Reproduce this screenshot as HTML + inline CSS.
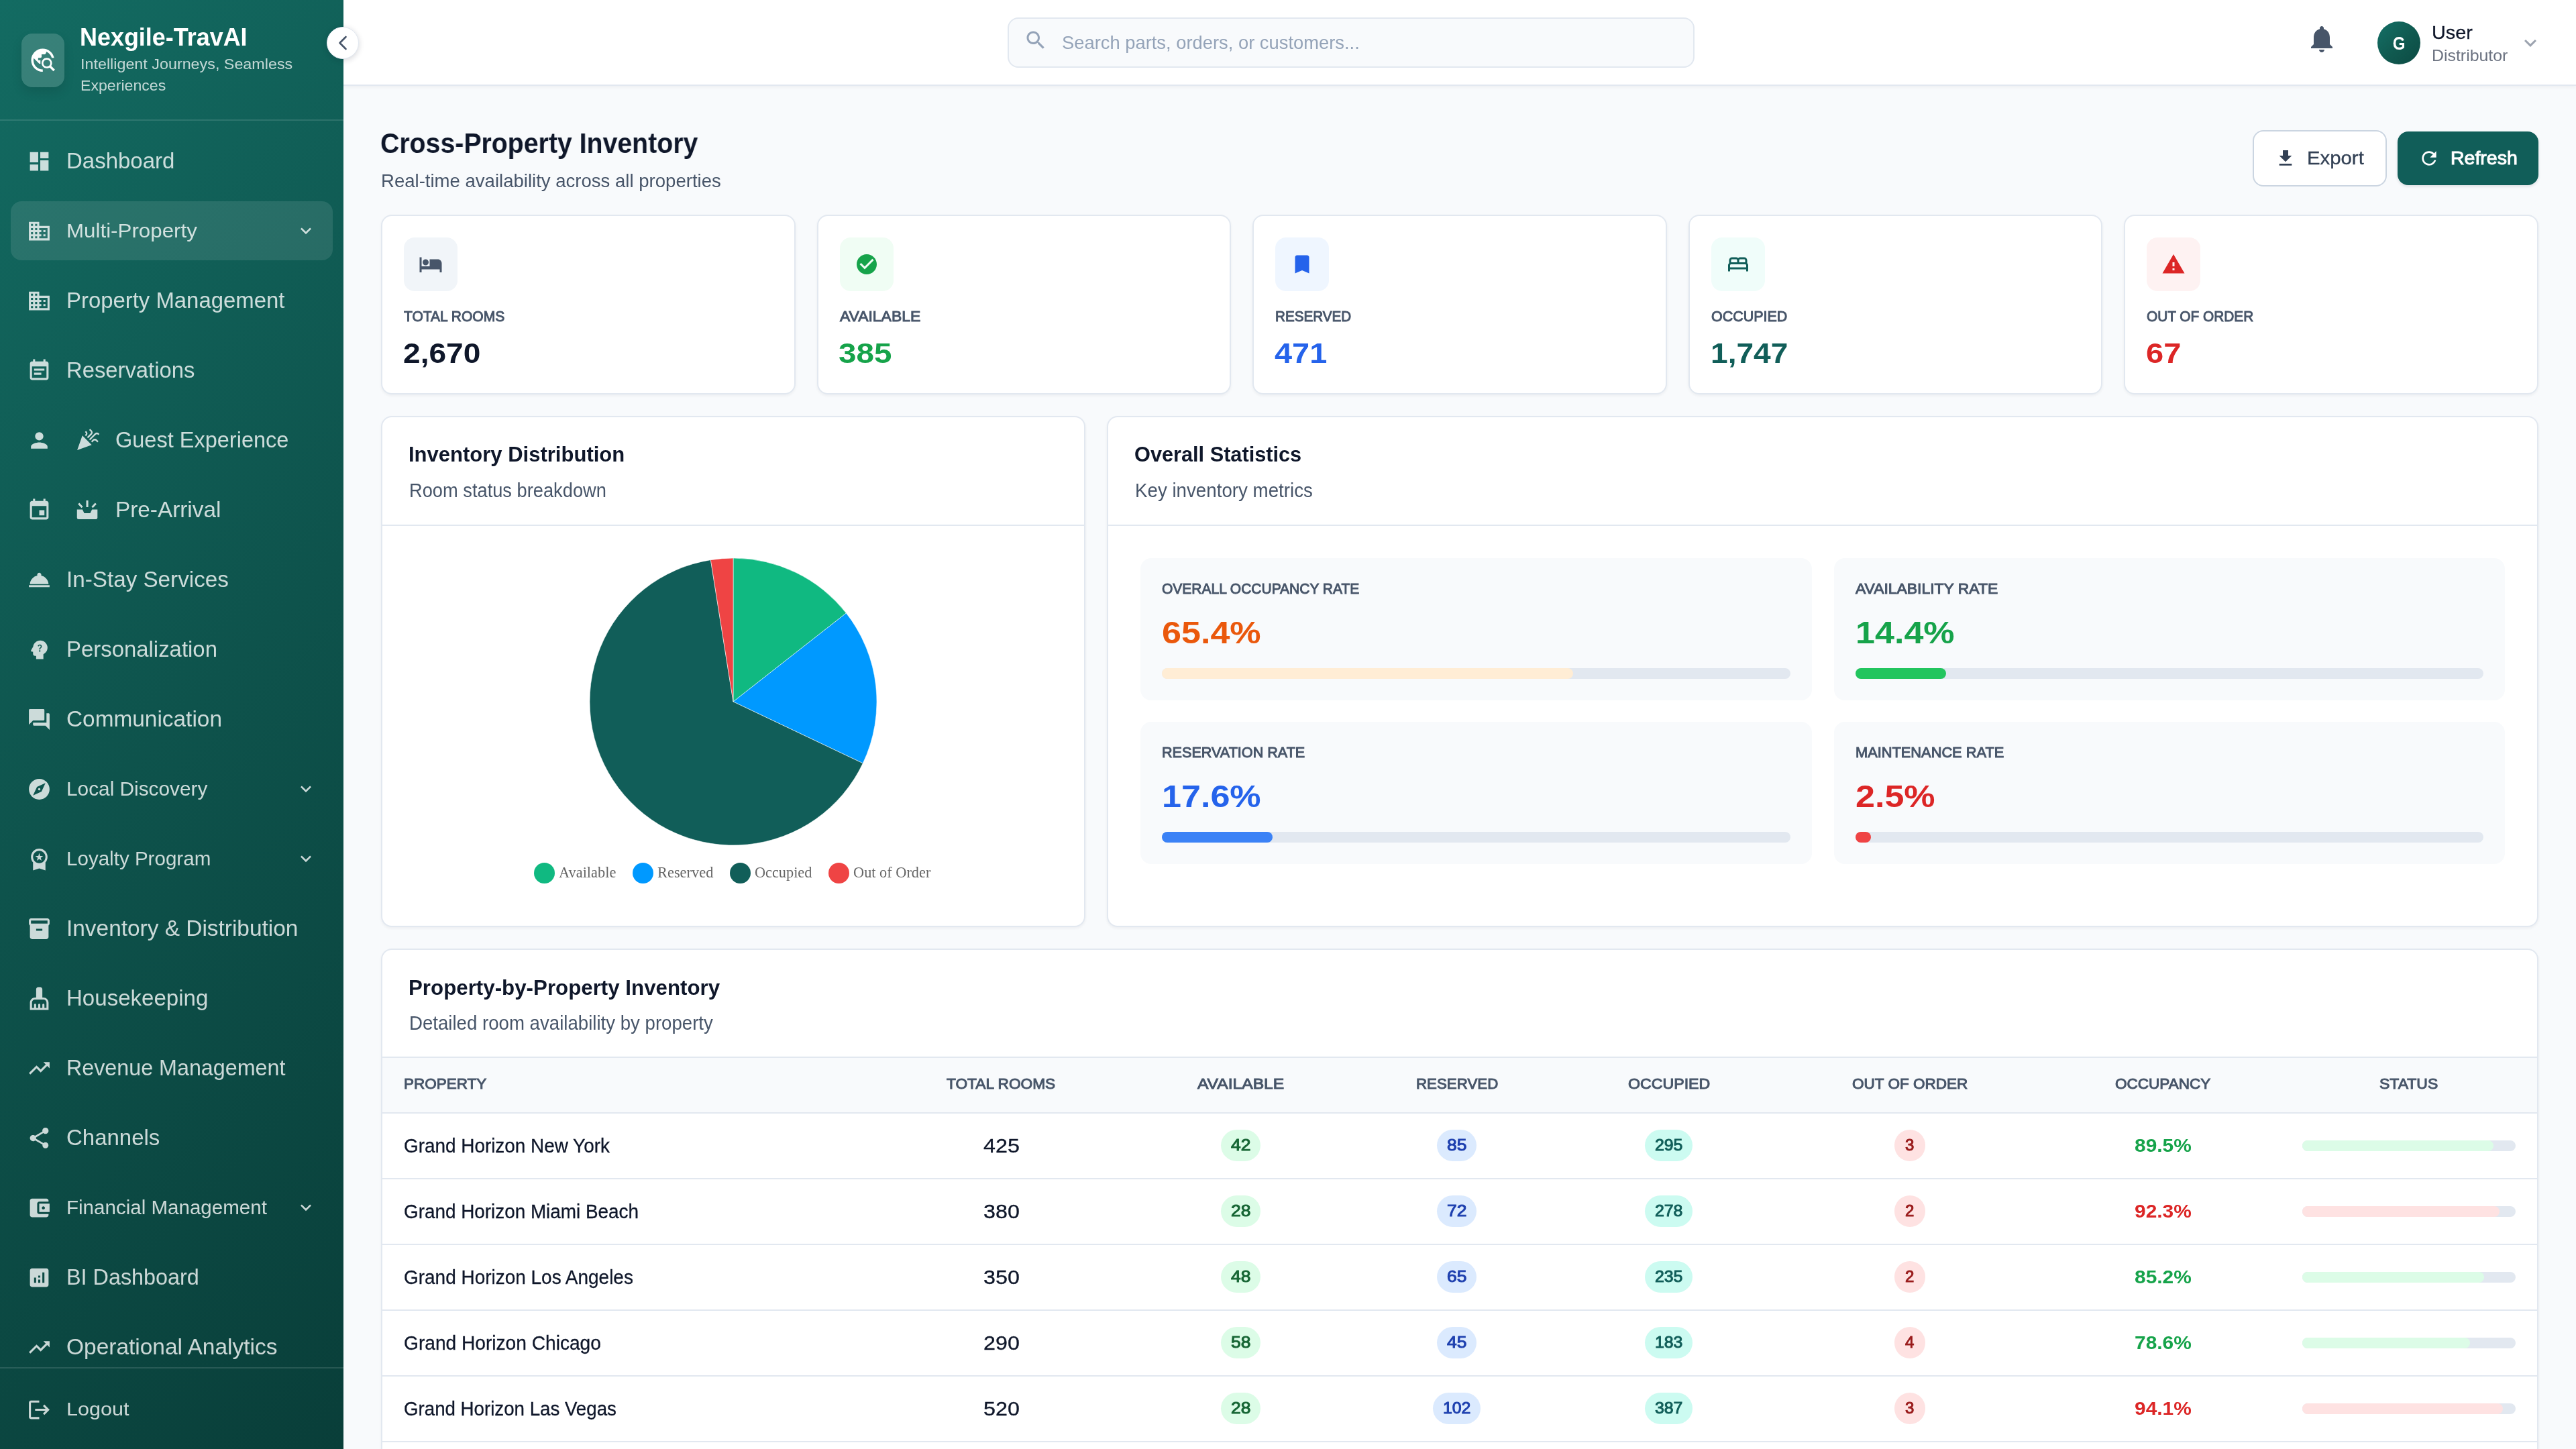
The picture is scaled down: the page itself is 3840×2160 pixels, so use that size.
<!DOCTYPE html>
<html lang="en"><head><meta charset="utf-8"><title>Cross-Property Inventory</title><style>
*{margin:0;padding:0}
html,body{width:3840px;height:2160px;overflow:hidden;background:#f8fafc;font-family:"Liberation Sans",sans-serif}
.side{position:absolute;left:0;top:0;width:512px;height:2160px;overflow:hidden;background:linear-gradient(135deg,#136b62 0%,#0e534c 50%,#093e39 100%)}
.hdr{position:absolute;left:0;top:0;width:3840px;height:0}
.hdr:before{content:"";position:absolute;left:512px;top:0;width:3328px;height:126px;background:#fff;border-bottom:2px solid #e2e8f0;box-shadow:0 2px 6px rgba(15,23,42,.05)}
.main{position:absolute;left:0;top:0;width:3840px;height:0}
.side,.hdr,.main{will-change:transform}
.t{position:absolute;white-space:pre;line-height:1;display:block;transform-origin:0 50%}
.i{position:absolute;display:block}
.b{position:absolute}
.card{position:absolute;box-sizing:border-box;background:#fff;border:2px solid #e2e8f0;border-radius:16px;box-shadow:0 2px 4px rgba(15,23,42,.05)}
</style></head><body><aside class="side"><div class="b" style="left:0px;top:178px;width:512px;height:2px;background:rgba(255,255,255,.12)"></div><div class="b" style="left:32px;top:50px;width:64px;height:80px;background:rgba(255,255,255,.16);border-radius:16px;box-shadow:0 8px 16px rgba(0,0,0,.10)"></div><svg class="i" style="left:43.4px;top:68.6px;" width="41.5" height="41.5" viewBox="0 0 24 24" fill="#fff"><path d="M19.3 16.9c.4-.7.7-1.5.7-2.4 0-2.5-2-4.5-4.5-4.5S11 12 11 14.5s2 4.5 4.5 4.500c.9 0 1.7-.3 2.4-.7l3.2 3.2 1.4-1.4-3.2-3.2zm-3.800.6c-1.7 0-3-1.3-3-3s1.3-3 3-3 3 1.3 3 3-1.3 3-3 3zM12 20v2C6.480 22 2 17.520 2 12S6.480 2 12 2c4.840 0 8.870 3.440 9.800 8h-2.070c-.640-2.460-2.400-4.470-4.730-5.410V5c0 1.100-.9 2-2 2h-2v2c0 .550-.450 1-1 1H8v2h2v3H9l-4.790-4.790C4.080 10.790 4 11.380 4 12c0 4.410 3.590 8 8 8z"/></svg><span class="t" id="t0" style="left:119.2px;top:37.6px;font-size:36px;font-weight:700;color:#fff;transform:scaleX(0.9980);">Nexgile-TravAI</span><span class="t" id="t1" style="left:119.9px;top:85.4px;font-size:22.4px;color:rgba(255,255,255,.75);transform:scaleX(1.0413);">Intelligent Journeys, Seamless</span><span class="t" id="t2" style="left:119.9px;top:117.1px;font-size:22.4px;color:rgba(255,255,255,.75);transform:scaleX(1.0326);">Experiences</span><svg class="i" style="left:40.0px;top:221.5px;" width="37" height="37" viewBox="0 0 24 24" fill="rgba(255,255,255,.79)"><path d="M3 13h8V3H3v10zm0 8h8v-6H3v6zm10 0h8V11h-8v10zm0-18v6h8V3h-8z"/></svg><span class="t" id="t3" style="left:98.9px;top:223.1px;font-size:33.6px;color:rgba(255,255,255,.79);transform:scaleX(0.9822);">Dashboard</span><div class="b" style="left:16px;top:300px;width:480px;height:88px;background:rgba(255,255,255,.10);border-radius:16px"></div><svg class="i" style="left:40.0px;top:325.5px;" width="37" height="37" viewBox="0 0 24 24" fill="rgba(255,255,255,.79)"><path d="M12 7V3H2v18h20V7H12zM6 19H4v-2h2v2zm0-4H4v-2h2v2zm0-4H4V9h2v2zm0-4H4V5h2v2zm4 12H8v-2h2v2zm0-4H8v-2h2v2zm0-4H8V9h2v2zm0-4H8V5h2v2zm10 12h-8v-2h2v-2h-2v-2h2v-2h-2V9h8v10zm-2-8h-2v2h2v-2zm0 4h-2v2h2v-2z"/></svg><span class="t" id="t4" style="left:99.2px;top:330.2px;font-size:28.8px;color:rgba(255,255,255,.79);transform:scaleX(1.0873);">Multi-Property</span><svg class="i" style="left:440.0px;top:328.0px;" width="32" height="32" viewBox="0 0 24 24" fill="rgba(255,255,255,.79)"><path d="M16.59 8.59L12 13.17 7.41 8.59 6 10l6 6 6-6z"/></svg><svg class="i" style="left:40.0px;top:429.5px;" width="37" height="37" viewBox="0 0 24 24" fill="rgba(255,255,255,.79)"><path d="M12 7V3H2v18h20V7H12zM6 19H4v-2h2v2zm0-4H4v-2h2v2zm0-4H4V9h2v2zm0-4H4V5h2v2zm4 12H8v-2h2v2zm0-4H8v-2h2v2zm0-4H8V9h2v2zm0-4H8V5h2v2zm10 12h-8v-2h2v-2h-2v-2h2v-2h-2V9h8v10zm-2-8h-2v2h2v-2zm0 4h-2v2h2v-2z"/></svg><span class="t" id="t5" style="left:98.9px;top:431.1px;font-size:33.6px;color:rgba(255,255,255,.79);transform:scaleX(0.9793);">Property Management</span><svg class="i" style="left:40.0px;top:533.5px;" width="37" height="37" viewBox="0 0 24 24" fill="rgba(255,255,255,.79)"><path d="M17 10H7v2h10v-2zm2-7h-1V1h-2v2H8V1H6v2H5c-1.11 0-1.99.9-1.99 2L3 19c0 1.1.89 2 2 2h14c1.1 0 2-.9 2-2V5c0-1.1-.9-2-2-2zm0 16H5V8h14v11zm-5-5H7v2h7v-2z"/></svg><span class="t" id="t6" style="left:98.9px;top:535.1px;font-size:33.6px;color:rgba(255,255,255,.79);transform:scaleX(0.9765);">Reservations</span><svg class="i" style="left:40.0px;top:637.5px;" width="37" height="37" viewBox="0 0 24 24" fill="rgba(255,255,255,.79)"><path d="M12 12c2.21 0 4-1.79 4-4s-1.79-4-4-4-4 1.79-4 4 1.79 4 4 4zm0 2c-2.67 0-8 1.34-8 4v2h16v-2c0-2.66-5.33-4-8-4z"/></svg><svg class="i" style="left:112.0px;top:636.5px;" width="37" height="37" viewBox="0 0 24 24" fill="rgba(255,255,255,.79)"><path d="M2 22l14-5-9-9zm12.53-9.47l5.59-5.59c.49-.49 1.28-.49 1.77 0l.59.59 1.06-1.06-.59-.59c-1.07-1.07-2.82-1.07-3.89 0l-5.59 5.59 1.06 1.06zm-4.47-5.65l-.59.59 1.06 1.06.59-.59c1.07-1.07 1.07-2.82 0-3.89l-.59-.59-1.06 1.07.59.59c.48.48.48 1.28 0 1.76zm7 5l-1.59 1.59 1.06 1.06 1.59-1.59c.49-.49 1.28-.49 1.77 0l1.61 1.61 1.06-1.06-1.61-1.61c-1.08-1.07-2.82-1.07-3.89 0zm-2-6l-3.59 3.59 1.06 1.06 3.59-3.59c1.07-1.07 1.07-2.82 0-3.89l-1.59-1.59-1.06 1.06 1.59 1.59c.48.49.48 1.29 0 1.77z"/></svg><span class="t" id="t7" style="left:171.5px;top:639.1px;font-size:33.6px;color:rgba(255,255,255,.79);transform:scaleX(0.9680);">Guest Experience</span><svg class="i" style="left:40.0px;top:741.5px;" width="37" height="37" viewBox="0 0 24 24" fill="rgba(255,255,255,.79)"><path d="M17 12h-5v5h5v-5zM16 1v2H8V1H6v2H5c-1.11 0-1.99.9-1.99 2L3 19c0 1.1.89 2 2 2h14c1.1 0 2-.9 2-2V5c0-1.1-.9-2-2-2h-1V1h-2zm3 18H5V8h14v11z"/></svg><svg class="i" style="left:112px;top:740px" width="37" height="37" viewBox="0 0 24 24" fill="rgba(255,255,255,.79)"><path d="M1.800 12.700H7.100L8.800 16.200H14.600L16.300 12.700H21.600V20.600a1.500 1.500 0 0 1-1.500 1.500H3.300a1.500 1.500 0 0 1-1.500-1.500zM10.700 3.900h2v6.400h-2z"/><path d="M3.400 6.800L6.900 10.500M20 6.800L16.500 10.500" stroke="rgba(255,255,255,.79)" stroke-width="1.900" fill="none"/></svg><span class="t" id="t8" style="left:171.5px;top:743.1px;font-size:33.6px;color:rgba(255,255,255,.79);transform:scaleX(0.9923);">Pre-Arrival</span><svg class="i" style="left:40.0px;top:845.5px;" width="37" height="37" viewBox="0 0 24 24" fill="rgba(255,255,255,.79)"><path d="M2 17h20v2H2zm11.84-9.21c.1-.24.16-.51.16-.79 0-1.1-.9-2-2-2s-2 .9-2 2c0 .28.06.55.16.79C6.25 8.6 3.27 11.93 3 16h18c-.27-4.07-3.25-7.4-7.16-8.21z"/></svg><span class="t" id="t9" style="left:98.9px;top:847.1px;font-size:33.6px;color:rgba(255,255,255,.79);transform:scaleX(0.9893);">In-Stay Services</span><svg class="i" style="left:40.0px;top:949.5px;" width="37" height="37" viewBox="0 0 24 24" fill="rgba(255,255,255,.79)"><path d="M19.94 9.06C19.5 5.73 16.57 3 13 3 9.47 3 6.57 5.61 6.08 9l-1.93 3.48c-.41.66.07 1.52.85 1.52h1v2c0 1.1.9 2 2 2h1v3h7v-4.68c2.62-1.25 4.35-4.08 3.94-7.26zM12.5 14c-.41 0-.74-.33-.74-.74 0-.41.33-.73.74-.73.41 0 .73.32.73.73 0 .41-.32.74-.73.74zm1.76-4.32c-.44.65-.86.85-1.09 1.27-.09.17-.13.28-.13.82h-1.06c0-.29-.04-.75.18-1.16.28-.51.83-.81 1.14-1.26.33-.47.15-1.36-.8-1.36-.62 0-.92.47-1.05.86l-.96-.4c.27-.78.97-1.45 2.01-1.45.86 0 1.45.39 1.75.88.26.43.41 1.22.01 1.8z"/></svg><span class="t" id="t10" style="left:98.9px;top:951.1px;font-size:33.6px;color:rgba(255,255,255,.79);transform:scaleX(0.9798);">Personalization</span><svg class="i" style="left:40.0px;top:1053.5px;" width="37" height="37" viewBox="0 0 24 24" fill="rgba(255,255,255,.79)"><path d="M21 6h-2v9H6v2c0 .55.45 1 1 1h11l4 4V7c0-.55-.45-1-1-1zm-4 6V3c0-.55-.45-1-1-1H3c-.55 0-1 .45-1 1v14l4-4h10c.55 0 1-.45 1-1z"/></svg><span class="t" id="t11" style="left:98.9px;top:1055.1px;font-size:33.6px;color:rgba(255,255,255,.79);transform:scaleX(0.9943);">Communication</span><svg class="i" style="left:40.0px;top:1157.5px;" width="37" height="37" viewBox="0 0 24 24" fill="rgba(255,255,255,.79)"><path d="M12 10.9c-.61 0-1.1.49-1.1 1.1s.49 1.1 1.1 1.1c.61 0 1.1-.49 1.1-1.1s-.49-1.1-1.1-1.1zM12 2C6.48 2 2 6.48 2 12s4.48 10 10 10 10-4.48 10-10S17.52 2 12 2zm2.19 12.19L6 18l3.81-8.19L18 6l-3.81 8.19z"/></svg><span class="t" id="t12" style="left:99.2px;top:1162.2px;font-size:28.8px;color:rgba(255,255,255,.79);transform:scaleX(1.0350);">Local Discovery</span><svg class="i" style="left:440.0px;top:1160.0px;" width="32" height="32" viewBox="0 0 24 24" fill="rgba(255,255,255,.79)"><path d="M16.59 8.59L12 13.17 7.41 8.59 6 10l6 6 6-6z"/></svg><svg class="i" style="left:40.0px;top:1261.5px;" width="37" height="37" viewBox="0 0 24 24" fill="rgba(255,255,255,.79)"><path d="M9.68 13.69 12 11.93l2.31 1.76-.88-2.85L15.75 9h-2.84L12 6.19 11.09 9H8.25l2.31 1.84-.88 2.85zM20 10c0-4.42-3.58-8-8-8s-8 3.58-8 8c0 2.03.76 3.87 2 5.28V23l6-2 6 2v-7.72c1.24-1.41 2-3.25 2-5.28zm-8-6c3.31 0 6 2.69 6 6s-2.69 6-6 6-6-2.69-6-6 2.69-6 6-6z"/></svg><span class="t" id="t13" style="left:99.2px;top:1266.2px;font-size:28.8px;color:rgba(255,255,255,.79);transform:scaleX(1.0267);">Loyalty Program</span><svg class="i" style="left:440.0px;top:1264.0px;" width="32" height="32" viewBox="0 0 24 24" fill="rgba(255,255,255,.79)"><path d="M16.59 8.59L12 13.17 7.41 8.59 6 10l6 6 6-6z"/></svg><svg class="i" style="left:40.0px;top:1365.5px;" width="37" height="37" viewBox="0 0 24 24" fill="rgba(255,255,255,.79)"><path d="M20 2H4c-1 0-2 .9-2 2v3.01c0 .72.43 1.34 1 1.69V20c0 1.1 1.1 2 2 2h14c.9 0 2-.9 2-2V8.7c.57-.35 1-.97 1-1.69V4c0-1.1-1-2-2-2zm-5 12H9v-2h6v2zm5-7H4V4h16v3z"/></svg><span class="t" id="t14" style="left:98.9px;top:1367.1px;font-size:33.6px;color:rgba(255,255,255,.79);transform:scaleX(0.9949);">Inventory &amp; Distribution</span><svg class="i" style="left:40.0px;top:1469.5px;" width="37" height="37" viewBox="0 0 24 24" fill="rgba(255,255,255,.79)"><path d="M16 11h-1V3c0-1.1-.9-2-2-2h-2c-1.1 0-2 .9-2 2v8H8c-2.76 0-5 2.24-5 5v7h18v-7c0-2.76-2.24-5-5-5zm3 10h-2v-3c0-.55-.45-1-1-1s-1 .45-1 1v3h-2v-3c0-.55-.45-1-1-1s-1 .45-1 1v3H9v-3c0-.55-.45-1-1-1s-1 .45-1 1v3H5v-5c0-1.65 1.35-3 3-3h8c1.65 0 3 1.35 3 3v5z"/></svg><span class="t" id="t15" style="left:98.9px;top:1471.1px;font-size:33.6px;color:rgba(255,255,255,.79);transform:scaleX(0.9845);">Housekeeping</span><svg class="i" style="left:40.0px;top:1573.5px;" width="37" height="37" viewBox="0 0 24 24" fill="rgba(255,255,255,.79)"><path d="M16 6l2.29 2.29-4.88 4.88-4-4L2 16.59 3.41 18l6-6 4 4 6.3-6.29L22 12V6z"/></svg><span class="t" id="t16" style="left:98.9px;top:1575.1px;font-size:33.6px;color:rgba(255,255,255,.79);transform:scaleX(0.9606);">Revenue Management</span><svg class="i" style="left:40.0px;top:1677.5px;" width="37" height="37" viewBox="0 0 24 24" fill="rgba(255,255,255,.79)"><path d="M18 16.08c-.76 0-1.44.3-1.96.77L8.91 12.7c.05-.23.09-.46.09-.7s-.04-.47-.09-.7l7.05-4.11c.54.5 1.25.81 2.04.81 1.66 0 3-1.34 3-3s-1.34-3-3-3-3 1.34-3 3c0 .24.04.47.09.7L8.04 9.81C7.5 9.31 6.79 9 6 9c-1.66 0-3 1.34-3 3s1.34 3 3 3c.79 0 1.5-.31 2.04-.81l7.12 4.16c-.05.21-.08.43-.08.65 0 1.61 1.31 2.92 2.92 2.92 1.61 0 2.92-1.31 2.92-2.92s-1.31-2.92-2.92-2.92z"/></svg><span class="t" id="t17" style="left:98.9px;top:1679.1px;font-size:33.6px;color:rgba(255,255,255,.79);transform:scaleX(0.9823);">Channels</span><svg class="i" style="left:40.0px;top:1781.5px;" width="37" height="37" viewBox="0 0 24 24" fill="rgba(255,255,255,.79)"><path d="M21 18v1c0 1.1-.9 2-2 2H5c-1.11 0-2-.9-2-2V5c0-1.1.89-2 2-2h14c1.1 0 2 .9 2 2v1h-9c-1.11 0-2 .9-2 2v8c0 1.1.89 2 2 2h9zm-9-2h10V8H12v8zm4-2.5c-.83 0-1.5-.67-1.5-1.5s.67-1.5 1.5-1.5 1.5.67 1.5 1.5-.67 1.5-1.5 1.5z"/></svg><span class="t" id="t18" style="left:99.2px;top:1786.2px;font-size:28.8px;color:rgba(255,255,255,.79);transform:scaleX(1.0259);">Financial Management</span><svg class="i" style="left:440.0px;top:1784.0px;" width="32" height="32" viewBox="0 0 24 24" fill="rgba(255,255,255,.79)"><path d="M16.59 8.59L12 13.17 7.41 8.59 6 10l6 6 6-6z"/></svg><svg class="i" style="left:40.0px;top:1885.5px;" width="37" height="37" viewBox="0 0 24 24" fill="rgba(255,255,255,.79)"><path d="M19 3H5c-1.1 0-2 .9-2 2v14c0 1.1.9 2 2 2h14c1.1 0 2-.9 2-2V5c0-1.1-.9-2-2-2zM9 17H7v-5h2v5zm4 0h-2v-3h2v3zm0-5h-2v-2h2v2zm4 5h-2V7h2v10z"/></svg><span class="t" id="t19" style="left:98.9px;top:1887.1px;font-size:33.6px;color:rgba(255,255,255,.79);transform:scaleX(0.9636);">BI Dashboard</span><svg class="i" style="left:40.0px;top:1989.5px;" width="37" height="37" viewBox="0 0 24 24" fill="rgba(255,255,255,.79)"><path d="M16 6l2.29 2.29-4.88 4.88-4-4L2 16.59 3.41 18l6-6 4 4 6.3-6.29L22 12V6z"/></svg><span class="t" id="t20" style="left:98.9px;top:1991.1px;font-size:33.6px;color:rgba(255,255,255,.79);transform:scaleX(0.9966);">Operational Analytics</span><div class="b" style="left:0px;top:2038px;width:512px;height:2px;background:rgba(255,255,255,.12)"></div><svg class="i" style="left:40.0px;top:2082.5px;" width="37" height="37" viewBox="0 0 24 24" fill="rgba(255,255,255,.79)"><path d="M17 7l-1.41 1.41L18.17 11H8v2h10.17l-2.58 2.58L17 17l5-5zM4 5h8V3H4c-1.1 0-2 .9-2 2v14c0 1.1.9 2 2 2h8v-2H4V5z"/></svg><span class="t" id="t21" style="left:99.2px;top:2086.8px;font-size:28px;color:rgba(255,255,255,.79);transform:scaleX(1.0918);">Logout</span></aside>
<header class="hdr"><div class="b" style="left:1502px;top:26px;width:1024px;height:75px;background:#f8fafc;border:2px solid #e2e8f0;border-radius:16px;box-sizing:border-box"></div><svg class="i" style="left:1525.5px;top:42.0px;" width="36" height="36" viewBox="0 0 24 24" fill="#94a3b8"><path d="M15.5 14h-.79l-.28-.27C15.41 12.59 16 11.11 16 9.5 16 5.91 13.09 3 9.5 3S3 5.91 3 9.5 5.91 16 9.5 16c1.61 0 3.09-.59 4.23-1.57l.27.28v.79l5 4.99L20.49 19l-4.99-5zm-6 0C7.01 14 5 11.99 5 9.5S7.01 5 9.5 5 14 7.01 14 9.5 11.99 14 9.5 14z"/></svg><span class="t" id="t22" style="left:1582.6px;top:50.3px;font-size:28px;color:#94a3b8;transform:scaleX(0.9767);">Search parts, orders, or customers...</span><svg class="i" style="left:3437.0px;top:34.0px;" width="48" height="48" viewBox="0 0 24 24" fill="#475569"><path d="M12 22c1.1 0 2-.9 2-2h-4c0 1.1.89 2 2 2zm6-6v-5c0-3.07-1.64-5.64-4.5-6.32V4c0-.83-.67-1.5-1.5-1.5s-1.5.67-1.5 1.5v.68C7.63 5.36 6 7.92 6 11v5l-2 2v1h16v-1l-2-2z"/></svg><div class="b" style="left:3544px;top:32px;width:64px;height:64px;border-radius:50%;background:linear-gradient(135deg,#147067 0%,#10594f 55%,#0c4a43 100%)"></div><span class="t" id="t23" style="left:3576.0px;top:50.8px;font-size:28px;font-weight:700;color:#fff;transform:translateX(-50%) scaleX(.86);transform-origin:50% 50%;">G</span><span class="t" id="t24" style="left:3624.6px;top:35.3px;font-size:28px;-webkit-text-stroke:0.3px currentColor;color:#0f172a;transform:scaleX(1.0283);">User</span><span class="t" id="t25" style="left:3624.8px;top:71.1px;font-size:24px;color:#6b7280;transform:scaleX(1.0369);">Distributor</span><svg class="i" style="left:3754.0px;top:45.5px;" width="36" height="36" viewBox="0 0 24 24" fill="#9ca3af"><path d="M16.59 8.59L12 13.17 7.41 8.59 6 10l6 6 6-6z"/></svg></header>
<div class="b" style="left:487px;top:40px;width:48px;height:48px;background:#fff;border-radius:50%;box-shadow:0 2px 8px rgba(15,23,42,.18);border:1px solid #e2e8f0;box-sizing:border-box;z-index:5"></div>
<svg class="i" style="left:493px;top:46px;z-index:6" width="36" height="36" viewBox="0 0 24 24" fill="none" stroke="#475569" stroke-width="1.75" stroke-linecap="round" stroke-linejoin="round"><path d="m15 18-6-6 6-6"/></svg>
<main class="main"><span class="t" id="t26" style="left:566.8px;top:192.3px;font-size:43.3px;font-weight:700;color:#0f172a;transform:scaleX(0.9066);">Cross-Property Inventory</span><span class="t" id="t27" style="left:567.6px;top:256.1px;font-size:27.4px;color:#475569;transform:scaleX(1.0057);">Real-time availability across all properties</span><div class="b" style="left:3358px;top:194px;width:200px;height:84px;background:#fff;border:2px solid #cbd5e1;border-radius:16px;box-sizing:border-box"></div><svg class="i" style="left:3391.0px;top:219.5px;" width="32" height="32" viewBox="0 0 24 24" fill="#334155"><path d="M19 9h-4V3H9v6H5l7 7 7-7zM5 18v2h14v-2H5z"/></svg><span class="t" id="t28" style="left:3438.6px;top:222.3px;font-size:28px;-webkit-text-stroke:0.3px currentColor;color:#334155;transform:scaleX(1.0477);">Export</span><div class="b" style="left:3574px;top:196px;width:210px;height:80px;background:#115e59;border-radius:16px;box-shadow:0 2px 4px rgba(15,23,42,.12)"></div><svg class="i" style="left:3605.0px;top:220.0px;" width="32" height="32" viewBox="0 0 24 24" fill="#fff"><path d="M17.65 6.35C16.2 4.9 14.21 4 12 4c-4.42 0-7.99 3.58-7.99 8s3.57 8 7.99 8c3.73 0 6.84-2.55 7.73-6h-2.08c-.82 2.33-3.04 4-5.65 4-3.31 0-6-2.69-6-6s2.69-6 6-6c1.66 0 3.14.69 4.22 1.78L13 11h7V4l-2.35 2.35z"/></svg><span class="t" id="t29" style="left:3652.6px;top:222.3px;font-size:28px;-webkit-text-stroke:1px currentColor;color:#fff;transform:scaleX(1.0179);">Refresh</span><div class="card" style="left:568.0px;top:320px;width:617.6px;height:268px"></div><div class="b" style="left:602px;top:354px;width:80px;height:80px;background:#f1f5f9;border-radius:16px"></div><svg class="i" style="left:624.0px;top:376.0px;" width="36" height="36" viewBox="0 0 24 24" fill="#475569"><path d="M7 13c1.66 0 3-1.34 3-3S8.66 7 7 7s-3 1.34-3 3 1.34 3 3 3zm12-6h-8v7H3V5H1v15h2v-3h18v3h2v-9c0-2.21-1.79-4-4-4z"/></svg><span class="t" id="t30" style="left:601.9px;top:461.1px;font-size:22.4px;-webkit-text-stroke:1px currentColor;color:#475569;transform:scaleX(0.9385);">TOTAL ROOMS</span><span class="t" id="t31" style="left:600.8px;top:505.3px;font-size:43.3px;font-weight:700;color:#0f172a;transform:scaleX(1.0643);">2,670</span><div class="card" style="left:1217.6px;top:320px;width:617.6px;height:268px"></div><div class="b" style="left:1252px;top:354px;width:80px;height:80px;background:#f0fdf4;border-radius:16px"></div><svg class="i" style="left:1274.0px;top:376.0px;" width="36" height="36" viewBox="0 0 24 24" fill="#16a34a"><path d="M12 2C6.48 2 2 6.48 2 12s4.48 10 10 10 10-4.48 10-10S17.52 2 12 2zm-2 15l-5-5 1.41-1.41L10 14.17l7.59-7.59L19 8l-9 9z"/></svg><span class="t" id="t32" style="left:1251.5px;top:461.1px;font-size:22.4px;-webkit-text-stroke:1px currentColor;color:#475569;transform:scaleX(1.0240);">AVAILABLE</span><span class="t" id="t33" style="left:1250.4px;top:505.3px;font-size:43.3px;font-weight:700;color:#16a34a;transform:scaleX(1.0980);">385</span><div class="card" style="left:1867.2px;top:320px;width:617.6px;height:268px"></div><div class="b" style="left:1901px;top:354px;width:80px;height:80px;background:#eff6ff;border-radius:16px"></div><svg class="i" style="left:1923.0px;top:376.0px;" width="36" height="36" viewBox="0 0 24 24" fill="#2563eb"><path d="M17 3H7c-1.1 0-1.99.9-1.99 2L5 21l7-3 7 3V5c0-1.1-.9-2-2-2z"/></svg><span class="t" id="t34" style="left:1901.1px;top:461.1px;font-size:22.4px;-webkit-text-stroke:1px currentColor;color:#475569;transform:scaleX(0.9223);">RESERVED</span><span class="t" id="t35" style="left:1900.0px;top:505.3px;font-size:43.3px;font-weight:700;color:#2563eb;transform:scaleX(1.0842);">471</span><div class="card" style="left:2516.8px;top:320px;width:617.6px;height:268px"></div><div class="b" style="left:2551px;top:354px;width:80px;height:80px;background:#f0fdfa;border-radius:16px"></div><svg class="i" style="left:2573.0px;top:376.0px;" width="36" height="36" viewBox="0 0 24 24" fill="#115e59"><path d="M21 10.78V8c0-1.65-1.35-3-3-3h-4c-.77 0-1.47.3-2 .78-.53-.48-1.23-.78-2-.78H6C4.35 5 3 6.35 3 8v2.78c-.61.55-1 1.34-1 2.22v6h2v-2h16v2h2v-6c0-.88-.39-1.67-1-2.22zM14 7h4c.55 0 1 .45 1 1v2h-6V8c0-.55.45-1 1-1zM5 8c0-.55.45-1 1-1h4c.55 0 1 .45 1 1v2H5V8zm-1 7v-2c0-.55.45-1 1-1h14c.55 0 1 .45 1 1v2H4z"/></svg><span class="t" id="t36" style="left:2550.7px;top:461.1px;font-size:22.4px;-webkit-text-stroke:1px currentColor;color:#475569;transform:scaleX(0.9581);">OCCUPIED</span><span class="t" id="t37" style="left:2549.6px;top:505.3px;font-size:43.3px;font-weight:700;color:#115e59;transform:scaleX(1.0643);">1,747</span><div class="card" style="left:3166.4px;top:320px;width:617.6px;height:268px"></div><div class="b" style="left:3200px;top:354px;width:80px;height:80px;background:#fef2f2;border-radius:16px"></div><svg class="i" style="left:3222.0px;top:376.0px;" width="36" height="36" viewBox="0 0 24 24" fill="#dc2626"><path d="M1 21h22L12 2 1 21zm12-3h-2v-2h2v2zm0-4h-2v-4h2v4z"/></svg><span class="t" id="t38" style="left:3200.3px;top:461.1px;font-size:22.4px;-webkit-text-stroke:1px currentColor;color:#475569;transform:scaleX(0.9298);">OUT OF ORDER</span><span class="t" id="t39" style="left:3199.2px;top:505.3px;font-size:43.3px;font-weight:700;color:#dc2626;transform:scaleX(1.0863);">67</span><div class="card" style="left:568px;top:620px;width:1050px;height:762px"></div><div class="b" style="left:570px;top:782px;width:1046px;height:2px;background:#e2e8f0"></div><span class="t" id="t40" style="left:609.4px;top:661.4px;font-size:32px;font-weight:700;color:#0f172a;transform:scaleX(0.9692);">Inventory Distribution</span><span class="t" id="t41" style="left:609.6px;top:716.9px;font-size:28.8px;color:#475569;transform:scaleX(0.9464);">Room status breakdown</span><svg class="i" style="left:0;top:0" width="3840" height="2160" viewBox="0 0 3840 2160"><path d="M1093 1046L1093.00 832.00A214 214 0 0 1 1261.43 913.98Z" fill="#10b981" stroke="#fff" stroke-opacity=".55" stroke-width="1"/><path d="M1093 1046L1261.43 913.98A214 214 0 0 1 1286.29 1137.85Z" fill="#0099ff" stroke="#fff" stroke-opacity=".55" stroke-width="1"/><path d="M1093 1046L1286.29 1137.85A214 214 0 1 1 1059.40 834.65Z" fill="#115e59" stroke="#fff" stroke-opacity=".55" stroke-width="1"/><path d="M1093 1046L1059.40 834.65A214 214 0 0 1 1093.00 832.00Z" fill="#ef4444" stroke="#fff" stroke-opacity=".55" stroke-width="1"/></svg><div class="b" style="left:796px;top:1285.5px;width:31px;height:31px;background:#10b981;border-radius:50%"></div><span class="t" id="t42" style="left:832.8px;top:1288.9px;font-size:23.5px;color:#666;transform:scaleX(0.9525);font-family:'Liberation Serif',serif;">Available</span><div class="b" style="left:943px;top:1285.5px;width:31px;height:31px;background:#0099ff;border-radius:50%"></div><span class="t" id="t43" style="left:979.8px;top:1288.9px;font-size:23.5px;color:#666;transform:scaleX(0.9533);font-family:'Liberation Serif',serif;">Reserved</span><div class="b" style="left:1088px;top:1285.5px;width:31px;height:31px;background:#115e59;border-radius:50%"></div><span class="t" id="t44" style="left:1124.8px;top:1288.9px;font-size:23.5px;color:#666;transform:scaleX(0.9478);font-family:'Liberation Serif',serif;">Occupied</span><div class="b" style="left:1235px;top:1285.5px;width:31px;height:31px;background:#ef4444;border-radius:50%"></div><span class="t" id="t45" style="left:1271.8px;top:1288.9px;font-size:23.5px;color:#666;transform:scaleX(0.9502);font-family:'Liberation Serif',serif;">Out of Order</span><div class="card" style="left:1650px;top:620px;width:2134px;height:762px"></div><div class="b" style="left:1652px;top:782px;width:2130px;height:2px;background:#e2e8f0"></div><span class="t" id="t46" style="left:1691.4px;top:661.4px;font-size:32px;font-weight:700;color:#0f172a;transform:scaleX(0.9596);">Overall Statistics</span><span class="t" id="t47" style="left:1691.6px;top:716.9px;font-size:28.8px;color:#475569;transform:scaleX(0.9623);">Key inventory metrics</span><div class="b" style="left:1700px;top:832px;width:1001px;height:212px;background:#f8fafc;border-radius:16px"></div><span class="t" id="t48" style="left:1731.9px;top:867.1px;font-size:22.4px;-webkit-text-stroke:1px currentColor;color:#475569;transform:scaleX(0.9372);">OVERALL OCCUPANCY RATE</span><span class="t" id="t49" style="left:1731.7px;top:920.3px;font-size:46.5px;font-weight:700;color:#ea580c;transform:scaleX(1.1198);">65.4%</span><div class="b" style="left:1732px;top:996px;width:937px;height:16px;background:#e2e8f0;border-radius:8px"></div><div class="b" style="left:1732px;top:996px;width:613px;height:16px;background:#ffedd5;border-radius:8px"></div><div class="b" style="left:2734px;top:832px;width:1000px;height:212px;background:#f8fafc;border-radius:16px"></div><span class="t" id="t50" style="left:2765.9px;top:867.1px;font-size:22.4px;-webkit-text-stroke:1px currentColor;color:#475569;transform:scaleX(1.0233);">AVAILABILITY RATE</span><span class="t" id="t51" style="left:2765.7px;top:920.3px;font-size:46.5px;font-weight:700;color:#16a34a;transform:scaleX(1.1198);">14.4%</span><div class="b" style="left:2766px;top:996px;width:936px;height:16px;background:#e2e8f0;border-radius:8px"></div><div class="b" style="left:2766px;top:996px;width:135px;height:16px;background:#22c55e;border-radius:8px"></div><div class="b" style="left:1700px;top:1076px;width:1001px;height:212px;background:#f8fafc;border-radius:16px"></div><span class="t" id="t52" style="left:1731.9px;top:1111.1px;font-size:22.4px;-webkit-text-stroke:1px currentColor;color:#475569;transform:scaleX(0.9647);">RESERVATION RATE</span><span class="t" id="t53" style="left:1731.7px;top:1164.3px;font-size:46.5px;font-weight:700;color:#2563eb;transform:scaleX(1.1198);">17.6%</span><div class="b" style="left:1732px;top:1240px;width:937px;height:16px;background:#e2e8f0;border-radius:8px"></div><div class="b" style="left:1732px;top:1240px;width:165px;height:16px;background:#3b82f6;border-radius:8px"></div><div class="b" style="left:2734px;top:1076px;width:1000px;height:212px;background:#f8fafc;border-radius:16px"></div><span class="t" id="t54" style="left:2765.9px;top:1111.1px;font-size:22.4px;-webkit-text-stroke:1px currentColor;color:#475569;transform:scaleX(0.9736);">MAINTENANCE RATE</span><span class="t" id="t55" style="left:2765.7px;top:1164.3px;font-size:46.5px;font-weight:700;color:#dc2626;transform:scaleX(1.1193);">2.5%</span><div class="b" style="left:2766px;top:1240px;width:936px;height:16px;background:#e2e8f0;border-radius:8px"></div><div class="b" style="left:2766px;top:1240px;width:23px;height:16px;background:#ef4444;border-radius:8px"></div><div class="card" style="left:568px;top:1414px;width:3216px;height:800px"></div><span class="t" id="t56" style="left:609.4px;top:1455.9px;font-size:32px;font-weight:700;color:#0f172a;transform:scaleX(0.9777);">Property-by-Property Inventory</span><span class="t" id="t57" style="left:609.6px;top:1510.9px;font-size:28.8px;color:#475569;transform:scaleX(0.9591);">Detailed room availability by property</span><div class="b" style="left:570px;top:1575px;width:3212px;height:2px;background:#e2e8f0"></div><div class="b" style="left:570px;top:1577px;width:3212px;height:81px;background:#f8fafc"></div><div class="b" style="left:570px;top:1658px;width:3212px;height:2px;background:#e2e8f0"></div><span class="t" id="t58" style="left:601.9px;top:1605.1px;font-size:22.4px;-webkit-text-stroke:1px currentColor;color:#475569;transform:scaleX(1.0037);">PROPERTY</span><span class="t" id="t59" style="left:1410.9px;top:1605.1px;font-size:22.4px;-webkit-text-stroke:1px currentColor;color:#475569;transform:scaleX(1.0135);">TOTAL ROOMS</span><span class="t" id="t60" style="left:1784.9px;top:1605.1px;font-size:22.4px;-webkit-text-stroke:1px currentColor;color:#475569;transform:scaleX(1.1006);">AVAILABLE</span><span class="t" id="t61" style="left:2110.9px;top:1605.1px;font-size:22.4px;-webkit-text-stroke:1px currentColor;color:#475569;transform:scaleX(0.9956);">RESERVED</span><span class="t" id="t62" style="left:2426.9px;top:1605.1px;font-size:22.4px;-webkit-text-stroke:1px currentColor;color:#475569;transform:scaleX(1.0343);">OCCUPIED</span><span class="t" id="t63" style="left:2760.9px;top:1605.1px;font-size:22.4px;-webkit-text-stroke:1px currentColor;color:#475569;transform:scaleX(1.0057);">OUT OF ORDER</span><span class="t" id="t64" style="left:3152.9px;top:1605.1px;font-size:22.4px;-webkit-text-stroke:1px currentColor;color:#475569;transform:scaleX(1.0059);">OCCUPANCY</span><span class="t" id="t65" style="left:3546.9px;top:1605.1px;font-size:22.4px;-webkit-text-stroke:1px currentColor;color:#475569;transform:scaleX(1.0262);">STATUS</span><span class="t" id="t66" style="left:601.6px;top:1693.9px;font-size:28.8px;-webkit-text-stroke:0.3px currentColor;color:#0f172a;transform:scaleX(0.9683);">Grand Horizon New York</span><span class="t" id="t67" style="left:1465.6px;top:1693.9px;font-size:28.8px;-webkit-text-stroke:0.3px currentColor;color:#0f172a;transform:scaleX(1.1214);">425</span><div class="b" style="left:1820.0px;top:1683.5px;width:59px;height:47px;background:#dcfce7;border-radius:24px"></div><span class="t" id="t68" style="left:1834.8px;top:1695.3px;font-size:24px;-webkit-text-stroke:1px currentColor;color:#166534;transform:scaleX(1.1010);">42</span><div class="b" style="left:2142.0px;top:1683.5px;width:59px;height:47px;background:#dbeafe;border-radius:24px"></div><span class="t" id="t69" style="left:2156.8px;top:1695.3px;font-size:24px;-webkit-text-stroke:1px currentColor;color:#1e40af;transform:scaleX(1.1010);">85</span><div class="b" style="left:2452.0px;top:1683.5px;width:71px;height:47px;background:#ccfbf1;border-radius:24px"></div><span class="t" id="t70" style="left:2466.8px;top:1695.3px;font-size:24px;-webkit-text-stroke:1px currentColor;color:#115e59;transform:scaleX(1.0338);">295</span><div class="b" style="left:2824.0px;top:1683.5px;width:46px;height:47px;background:#fee2e2;border-radius:24px"></div><span class="t" id="t71" style="left:2840.0px;top:1695.3px;font-size:24px;-webkit-text-stroke:1px currentColor;color:#991b1b;">3</span><span class="t" id="t72" style="left:3181.6px;top:1694.3px;font-size:28px;font-weight:700;color:#16a34a;transform:scaleX(1.0679);">89.5%</span><div class="b" style="left:3432px;top:1700px;width:318px;height:16px;background:#e2e8f0;border-radius:8px"></div><div class="b" style="left:3432px;top:1700px;width:285px;height:16px;background:#dcfce7;border-radius:8px"></div><div class="b" style="left:570px;top:1756px;width:3212px;height:2px;background:#e2e8f0"></div><span class="t" id="t73" style="left:601.6px;top:1791.9px;font-size:28.8px;-webkit-text-stroke:0.3px currentColor;color:#0f172a;transform:scaleX(0.9673);">Grand Horizon Miami Beach</span><span class="t" id="t74" style="left:1465.6px;top:1791.9px;font-size:28.8px;-webkit-text-stroke:0.3px currentColor;color:#0f172a;transform:scaleX(1.1214);">380</span><div class="b" style="left:1820.0px;top:1781.5px;width:59px;height:47px;background:#dcfce7;border-radius:24px"></div><span class="t" id="t75" style="left:1834.8px;top:1793.3px;font-size:24px;-webkit-text-stroke:1px currentColor;color:#166534;transform:scaleX(1.1010);">28</span><div class="b" style="left:2142.0px;top:1781.5px;width:59px;height:47px;background:#dbeafe;border-radius:24px"></div><span class="t" id="t76" style="left:2156.8px;top:1793.3px;font-size:24px;-webkit-text-stroke:1px currentColor;color:#1e40af;transform:scaleX(1.1010);">72</span><div class="b" style="left:2452.0px;top:1781.5px;width:71px;height:47px;background:#ccfbf1;border-radius:24px"></div><span class="t" id="t77" style="left:2466.8px;top:1793.3px;font-size:24px;-webkit-text-stroke:1px currentColor;color:#115e59;transform:scaleX(1.0338);">278</span><div class="b" style="left:2824.0px;top:1781.5px;width:46px;height:47px;background:#fee2e2;border-radius:24px"></div><span class="t" id="t78" style="left:2840.0px;top:1793.3px;font-size:24px;-webkit-text-stroke:1px currentColor;color:#991b1b;">2</span><span class="t" id="t79" style="left:3181.6px;top:1792.3px;font-size:28px;font-weight:700;color:#dc2626;transform:scaleX(1.0679);">92.3%</span><div class="b" style="left:3432px;top:1798px;width:318px;height:16px;background:#e2e8f0;border-radius:8px"></div><div class="b" style="left:3432px;top:1798px;width:294px;height:16px;background:#fee2e2;border-radius:8px"></div><div class="b" style="left:570px;top:1854px;width:3212px;height:2px;background:#e2e8f0"></div><span class="t" id="t80" style="left:601.6px;top:1889.9px;font-size:28.8px;-webkit-text-stroke:0.3px currentColor;color:#0f172a;transform:scaleX(0.9708);">Grand Horizon Los Angeles</span><span class="t" id="t81" style="left:1465.6px;top:1889.9px;font-size:28.8px;-webkit-text-stroke:0.3px currentColor;color:#0f172a;transform:scaleX(1.1214);">350</span><div class="b" style="left:1820.0px;top:1879.5px;width:59px;height:47px;background:#dcfce7;border-radius:24px"></div><span class="t" id="t82" style="left:1834.8px;top:1891.3px;font-size:24px;-webkit-text-stroke:1px currentColor;color:#166534;transform:scaleX(1.1010);">48</span><div class="b" style="left:2142.0px;top:1879.5px;width:59px;height:47px;background:#dbeafe;border-radius:24px"></div><span class="t" id="t83" style="left:2156.8px;top:1891.3px;font-size:24px;-webkit-text-stroke:1px currentColor;color:#1e40af;transform:scaleX(1.1010);">65</span><div class="b" style="left:2452.0px;top:1879.5px;width:71px;height:47px;background:#ccfbf1;border-radius:24px"></div><span class="t" id="t84" style="left:2466.8px;top:1891.3px;font-size:24px;-webkit-text-stroke:1px currentColor;color:#115e59;transform:scaleX(1.0338);">235</span><div class="b" style="left:2824.0px;top:1879.5px;width:46px;height:47px;background:#fee2e2;border-radius:24px"></div><span class="t" id="t85" style="left:2840.0px;top:1891.3px;font-size:24px;-webkit-text-stroke:1px currentColor;color:#991b1b;">2</span><span class="t" id="t86" style="left:3181.6px;top:1890.3px;font-size:28px;font-weight:700;color:#16a34a;transform:scaleX(1.0679);">85.2%</span><div class="b" style="left:3432px;top:1896px;width:318px;height:16px;background:#e2e8f0;border-radius:8px"></div><div class="b" style="left:3432px;top:1896px;width:271px;height:16px;background:#dcfce7;border-radius:8px"></div><div class="b" style="left:570px;top:1952px;width:3212px;height:2px;background:#e2e8f0"></div><span class="t" id="t87" style="left:601.6px;top:1987.9px;font-size:28.8px;-webkit-text-stroke:0.3px currentColor;color:#0f172a;transform:scaleX(0.9766);">Grand Horizon Chicago</span><span class="t" id="t88" style="left:1465.6px;top:1987.9px;font-size:28.8px;-webkit-text-stroke:0.3px currentColor;color:#0f172a;transform:scaleX(1.1214);">290</span><div class="b" style="left:1820.0px;top:1977.5px;width:59px;height:47px;background:#dcfce7;border-radius:24px"></div><span class="t" id="t89" style="left:1834.8px;top:1989.3px;font-size:24px;-webkit-text-stroke:1px currentColor;color:#166534;transform:scaleX(1.1010);">58</span><div class="b" style="left:2142.0px;top:1977.5px;width:59px;height:47px;background:#dbeafe;border-radius:24px"></div><span class="t" id="t90" style="left:2156.8px;top:1989.3px;font-size:24px;-webkit-text-stroke:1px currentColor;color:#1e40af;transform:scaleX(1.1010);">45</span><div class="b" style="left:2452.0px;top:1977.5px;width:71px;height:47px;background:#ccfbf1;border-radius:24px"></div><span class="t" id="t91" style="left:2466.8px;top:1989.3px;font-size:24px;-webkit-text-stroke:1px currentColor;color:#115e59;transform:scaleX(1.0338);">183</span><div class="b" style="left:2824.0px;top:1977.5px;width:46px;height:47px;background:#fee2e2;border-radius:24px"></div><span class="t" id="t92" style="left:2840.0px;top:1989.3px;font-size:24px;-webkit-text-stroke:1px currentColor;color:#991b1b;">4</span><span class="t" id="t93" style="left:3181.6px;top:1988.3px;font-size:28px;font-weight:700;color:#16a34a;transform:scaleX(1.0679);">78.6%</span><div class="b" style="left:3432px;top:1994px;width:318px;height:16px;background:#e2e8f0;border-radius:8px"></div><div class="b" style="left:3432px;top:1994px;width:250px;height:16px;background:#dcfce7;border-radius:8px"></div><div class="b" style="left:570px;top:2050px;width:3212px;height:2px;background:#e2e8f0"></div><span class="t" id="t94" style="left:601.6px;top:2085.9px;font-size:28.8px;-webkit-text-stroke:0.3px currentColor;color:#0f172a;transform:scaleX(0.9609);">Grand Horizon Las Vegas</span><span class="t" id="t95" style="left:1465.6px;top:2085.9px;font-size:28.8px;-webkit-text-stroke:0.3px currentColor;color:#0f172a;transform:scaleX(1.1214);">520</span><div class="b" style="left:1820.0px;top:2075.5px;width:59px;height:47px;background:#dcfce7;border-radius:24px"></div><span class="t" id="t96" style="left:1834.8px;top:2087.3px;font-size:24px;-webkit-text-stroke:1px currentColor;color:#166534;transform:scaleX(1.1010);">28</span><div class="b" style="left:2136.0px;top:2075.5px;width:71px;height:47px;background:#dbeafe;border-radius:24px"></div><span class="t" id="t97" style="left:2150.8px;top:2087.3px;font-size:24px;-webkit-text-stroke:1px currentColor;color:#1e40af;transform:scaleX(1.0338);">102</span><div class="b" style="left:2452.0px;top:2075.5px;width:71px;height:47px;background:#ccfbf1;border-radius:24px"></div><span class="t" id="t98" style="left:2466.8px;top:2087.3px;font-size:24px;-webkit-text-stroke:1px currentColor;color:#115e59;transform:scaleX(1.0338);">387</span><div class="b" style="left:2824.0px;top:2075.5px;width:46px;height:47px;background:#fee2e2;border-radius:24px"></div><span class="t" id="t99" style="left:2840.0px;top:2087.3px;font-size:24px;-webkit-text-stroke:1px currentColor;color:#991b1b;">3</span><span class="t" id="t100" style="left:3181.6px;top:2086.3px;font-size:28px;font-weight:700;color:#dc2626;transform:scaleX(1.0679);">94.1%</span><div class="b" style="left:3432px;top:2092px;width:318px;height:16px;background:#e2e8f0;border-radius:8px"></div><div class="b" style="left:3432px;top:2092px;width:299px;height:16px;background:#fee2e2;border-radius:8px"></div><div class="b" style="left:570px;top:2148px;width:3212px;height:2px;background:#e2e8f0"></div></main><script>(function(){var w=window.innerWidth;if(w&&w<3800){document.documentElement.style.zoom=w/3840}})()</script></body></html>
